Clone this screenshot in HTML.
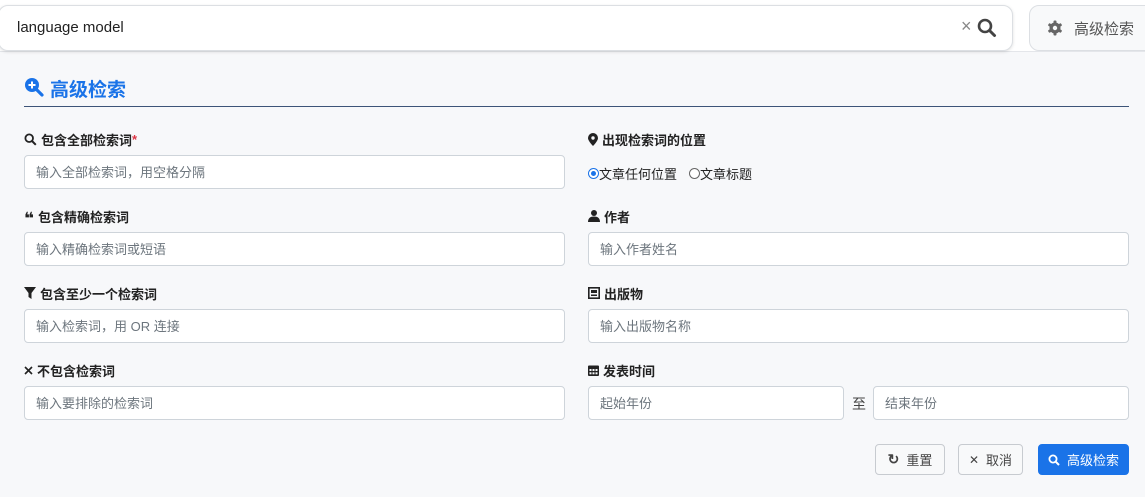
<!DOCTYPE html>
<html><head><meta charset="utf-8"><style>
*{box-sizing:border-box;margin:0;padding:0}
body{width:1145px;height:497px;overflow:hidden;background:#fff;font-family:"Liberation Sans","Noto Sans CJK SC",sans-serif;position:relative;color:#212529}
.a{position:absolute}
.panel{left:0;top:51px;width:1145px;height:446px;background:#f7f8fa;border-top:1px solid #e4e6ea}
.sb{left:-2px;top:5px;width:1015px;height:46px;background:#fff;border:1px solid #dcdfe3;border-radius:10px;box-shadow:0 1px 3px rgba(0,0,0,.12)}
.ab{left:1029px;top:5px;width:130px;height:46px;background:#f8f9fa;border:1px solid #dcdfe3;border-radius:10px}
.lbl{font-size:13px;font-weight:bold;color:#222;display:flex;align-items:center;gap:4px;height:18px}
.in{height:34px;background:#fff;border:1px solid #ced4da;border-radius:4px;font-size:13px;color:#6c757d;padding-left:11px;line-height:33px}
.btn{height:31px;border:1px solid #c7cbd0;border-radius:4px;font-size:13px;color:#444;display:flex;align-items:center;justify-content:center;gap:7px;background:#f8f9fa}
</style></head><body>
<div class="a panel"></div>
<div class="a sb"></div>
<div class="a" style="left:17px;top:19px;font-size:15px;color:#222">language model</div>
<div class="a" style="left:961px;top:16px;font-size:18px;color:#888">×</div>
<svg class="a" style="left:977px;top:18px" width="20" height="20" viewBox="0 0 20 20"><circle cx="8" cy="8" r="6" fill="none" stroke="#444" stroke-width="2.6"/><path d="M12.5 12.5L17.5 17.5" stroke="#444" stroke-width="3" stroke-linecap="round"/></svg>
<div class="a ab"></div>
<svg class="a" style="left:1047px;top:20px" width="16" height="16" viewBox="0 0 16 16"><g fill="#666"><circle cx="8" cy="8" r="5.5"/><rect x="6.5" y="0.5" width="3" height="15" rx="1"/><rect x="6.5" y="0.5" width="3" height="15" rx="1" transform="rotate(60 8 8)"/><rect x="6.5" y="0.5" width="3" height="15" rx="1" transform="rotate(120 8 8)"/></g><circle cx="8" cy="8" r="2.2" fill="#f8f9fa"/></svg>
<div class="a" style="left:1074px;top:18px;font-size:15px;color:#555">高级检索</div>

<svg class="a" style="left:24px;top:77px" width="20" height="20" viewBox="0 0 20 20"><circle cx="8" cy="8" r="7" fill="#1a73e8"/><path d="M12.5 12.5L18 18" stroke="#1a73e8" stroke-width="3.2" stroke-linecap="round"/><path d="M8 4.5v7M4.5 8h7" stroke="#fff" stroke-width="2"/></svg>
<div class="a" style="left:50px;top:75px;font-size:19px;font-weight:bold;color:#1a73e8">高级检索</div>
<div class="a" style="left:24px;top:106px;width:1105px;height:1px;background:#3d5478"></div>

<div class="a lbl" style="left:24px;top:130px"><svg width="13" height="13" viewBox="0 0 13 13"><circle cx="5.2" cy="5.2" r="3.8" fill="none" stroke="#222" stroke-width="1.8"/><path d="M8 8l3.8 3.8" stroke="#222" stroke-width="2"/></svg>包含全部检索词<span style="color:#dc3545;margin-left:-4px">*</span></div>
<div class="a in" style="left:24px;top:155px;width:541px">输入全部检索词，用空格分隔</div>
<div class="a lbl" style="left:24px;top:207px"><span style="font-size:17px;line-height:10px;margin-top:6px;font-family:'DejaVu Sans'">❝</span>包含精确检索词</div>
<div class="a in" style="left:24px;top:232px;width:541px">输入精确检索词或短语</div>
<div class="a lbl" style="left:24px;top:284px"><svg width="12" height="12" viewBox="0 0 12 12"><path d="M0 0h12L7.5 6v6L4.5 10V6z" fill="#222"/></svg>包含至少一个检索词</div>
<div class="a in" style="left:24px;top:309px;width:541px">输入检索词，用 OR 连接</div>
<div class="a lbl" style="left:24px;top:361px"><svg width="9" height="9" viewBox="0 0 9 9"><path d="M1 1l7 7M8 1L1 8" stroke="#222" stroke-width="1.6"/></svg>不包含检索词</div>
<div class="a in" style="left:24px;top:386px;width:541px">输入要排除的检索词</div>

<div class="a lbl" style="left:588px;top:130px"><svg width="10" height="13" viewBox="0 0 10 13"><path d="M5 0a5 5 0 0 1 5 5c0 3-5 8-5 8S0 8 0 5a5 5 0 0 1 5-5z" fill="#222"/><circle cx="5" cy="5" r="1.7" fill="#f7f8fa"/></svg>出现检索词的位置</div>
<div class="a" style="left:588px;top:164px;font-size:13px;color:#222;display:flex;align-items:center">
<span style="width:11px;height:11px;border-radius:50%;border:1px solid #1a73e8;display:inline-block;position:relative;background:#fff"><span style="position:absolute;left:2px;top:2px;width:5px;height:5px;border-radius:50%;background:#1a73e8"></span></span>文章任何位置<span style="width:11px;height:11px;border-radius:50%;border:1px solid #666;display:inline-block;margin-left:12px;background:#fff"></span>文章标题</div>
<div class="a lbl" style="left:588px;top:207px"><svg width="12" height="12" viewBox="0 0 12 12"><circle cx="6" cy="3" r="3" fill="#222"/><path d="M0 12c0-4 2.5-5.5 6-5.5S12 8 12 12z" fill="#222"/></svg>作者</div>
<div class="a in" style="left:588px;top:232px;width:541px">输入作者姓名</div>
<div class="a lbl" style="left:588px;top:284px"><svg width="12" height="12" viewBox="0 0 12 12"><rect x="0.8" y="0.8" width="10.4" height="10.4" fill="none" stroke="#222" stroke-width="1.6"/><rect x="3" y="3" width="6" height="3" fill="#222"/><rect x="3" y="7.5" width="6" height="1.5" fill="#222"/></svg>出版物</div>
<div class="a in" style="left:588px;top:309px;width:541px">输入出版物名称</div>
<div class="a lbl" style="left:588px;top:361px"><svg width="11" height="12" viewBox="0 0 11 12"><rect x="0" y="1.5" width="11" height="10.5" rx="1" fill="#222"/><g fill="#f7f8fa"><rect x="1.5" y="5" width="2" height="2"/><rect x="4.5" y="5" width="2" height="2"/><rect x="7.5" y="5" width="2" height="2"/><rect x="1.5" y="8.3" width="2" height="2"/><rect x="4.5" y="8.3" width="2" height="2"/><rect x="7.5" y="8.3" width="2" height="2"/></g></svg>发表时间</div>
<div class="a in" style="left:588px;top:386px;width:256px">起始年份</div>
<div class="a" style="left:852px;top:394px;font-size:14px;color:#444">至</div>
<div class="a in" style="left:873px;top:386px;width:256px">结束年份</div>

<div class="a btn" style="left:875px;top:444px;width:70px"><span style="font-size:14px;font-weight:bold">↻</span>重置</div>
<div class="a btn" style="left:958px;top:444px;width:65px"><span style="font-size:12px">✕</span>取消</div>
<div class="a btn" style="left:1038px;top:444px;width:91px;background:#1a73e8;border-color:#1a73e8;color:#fff"><svg width="12" height="12" viewBox="0 0 12 12"><circle cx="5" cy="5" r="3.6" fill="none" stroke="#fff" stroke-width="1.8"/><path d="M7.6 7.6l3.4 3.4" stroke="#fff" stroke-width="2"/></svg>高级检索</div>
</body></html>
